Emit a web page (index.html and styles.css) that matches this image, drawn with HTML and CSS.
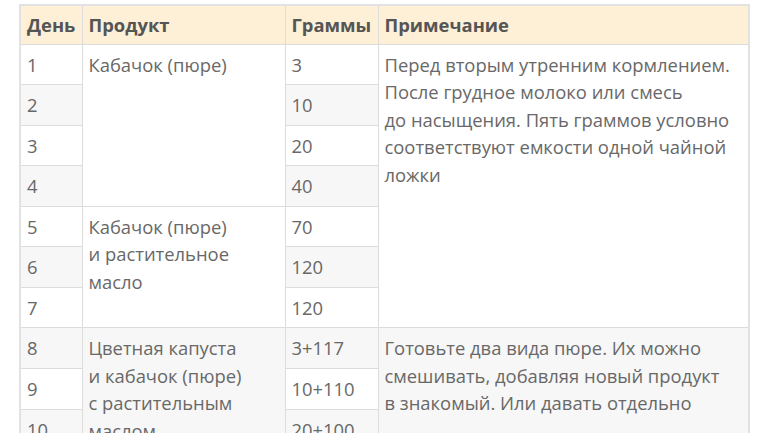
FILE: index.html
```html
<!DOCTYPE html>
<html lang="ru">
<head>
<meta charset="utf-8">
<link rel="stylesheet" href="styles.css">
</head>
<body>
<table class="plan">
  <colgroup>
    <col class="c-day"><col class="c-prod"><col class="c-gram"><col class="c-note">
  </colgroup>
  <thead>
    <tr><th>День</th><th>Продукт</th><th>Граммы</th><th>Примечание</th></tr>
  </thead>
  <tbody>
    <tr><td>1</td><td rowspan="4">Кабачок (пюре)</td><td>3</td><td rowspan="7">Перед вторым утренним кормлением.<br>После грудное молоко или смесь<br>до насыщения. Пять граммов условно<br>соответствуют емкости одной чайной<br>ложки</td></tr>
    <tr><td>2</td><td>10</td></tr>
    <tr><td>3</td><td>20</td></tr>
    <tr><td>4</td><td>40</td></tr>
    <tr><td>5</td><td rowspan="3">Кабачок (пюре)<br>и растительное<br>масло</td><td>70</td></tr>
    <tr><td>6</td><td>120</td></tr>
    <tr><td>7</td><td>120</td></tr>
    <tr><td>8</td><td rowspan="3">Цветная капуста<br>и кабачок (пюре)<br>с растительным<br>маслом</td><td>3+117</td><td rowspan="4">Готовьте два вида пюре. Их можно<br>смешивать, добавляя новый продукт<br>в знакомый. Или давать отдельно</td></tr>
    <tr><td>9</td><td>10+110</td></tr>
    <tr><td>10</td><td>20+100</td></tr>
    <tr><td>11</td><td>Цветная капуста</td><td>40+80</td></tr>
  </tbody>
</table>
</body>
</html>
```
FILE: styles.css
```css
html, body {
  margin: 0;
  padding: 0;
  background: #fff;
}
body {
  padding: 4px 20px 0 19px;
  font-family: "Open Sans", "Noto Sans", sans-serif;
  font-size: 18.4px;
  color: #686868;
}
.plan {
  width: 731px;
  border-collapse: collapse;
  table-layout: fixed;
  border: 2px solid #e2e2e2;
}
.c-day { width: 62px; }
.c-prod { width: 203px; }
.c-gram { width: 93px; }
.c-note { width: auto; }
.plan th, .plan td {
  border: 1px solid #dcdcdc;
  padding: 6px 6px 6px 6px;
  line-height: 27.5px;
  text-align: left;
  vertical-align: top;
  white-space: nowrap;
}
.plan th {
  background: #fdf0d6;
  color: #555;
  font-weight: 700;
  vertical-align: middle;
  padding-top: 5px;
  padding-bottom: 5px;
}
.plan tbody tr:nth-child(even) td {
  background: #f7f7f7;
}
.plan tbody tr:nth-child(odd) td {
  background: #fff;
}
```
